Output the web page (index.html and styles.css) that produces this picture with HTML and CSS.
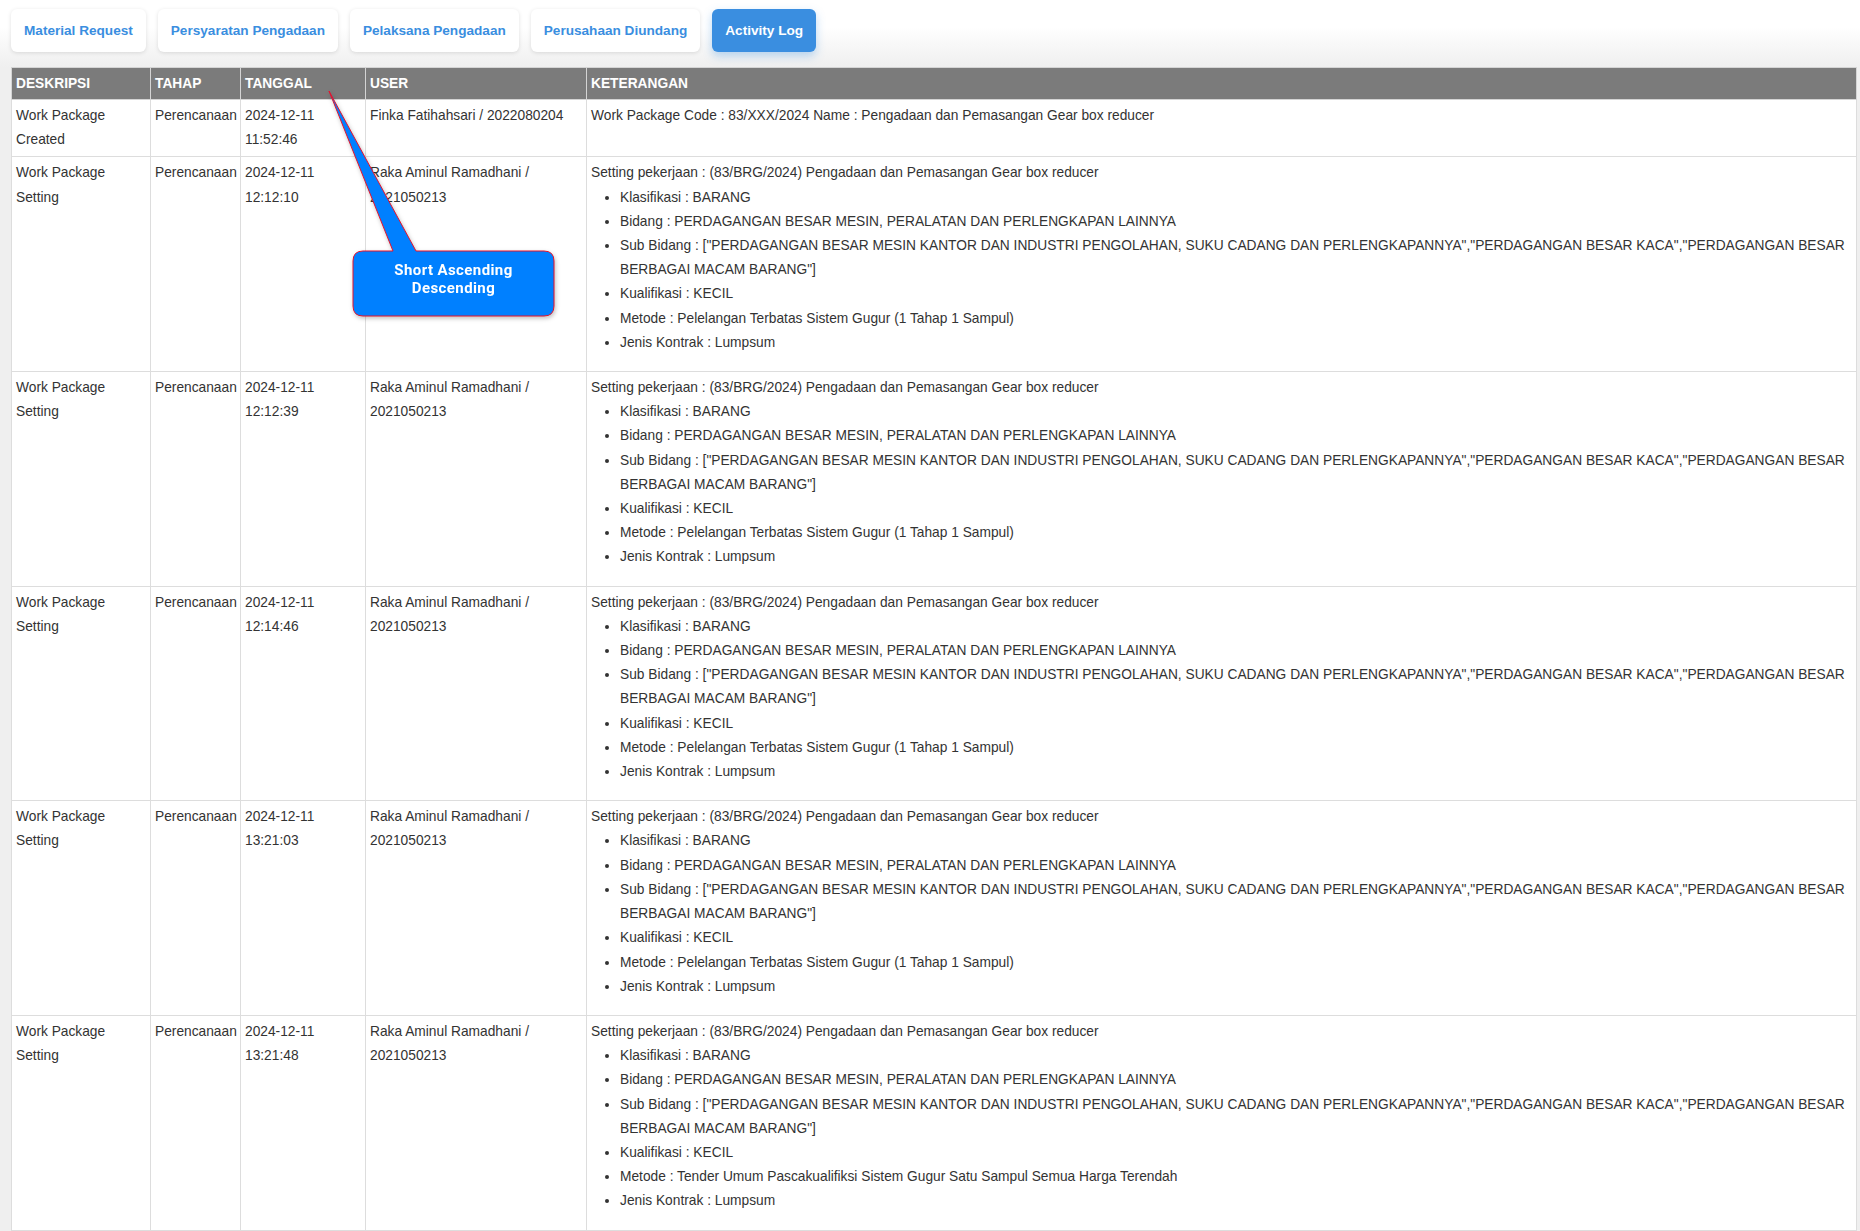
FILE: index.html
```html
<!DOCTYPE html>
<html lang="id">
  <head>
    <meta charset="UTF-8" />
    <meta name="viewport" content="width=device-width, initial-scale=1.0" />
    <title>Activity Log</title>
    <link rel="stylesheet" href="styles.css">
  </head>
  <body>
    <div class="tab-bar">
      <div class="tab">Material Request</div>
      <div class="tab">Persyaratan Pengadaan</div>
      <div class="tab">Pelaksana Pengadaan</div>
      <div class="tab">Perusahaan Diundang</div>
      <div class="tab active">Activity Log</div>
    </div>

    <table class="log-table">
      <colgroup>
        <col class="col-desc" />
        <col class="col-tahap" />
        <col class="col-tanggal" />
        <col class="col-user" />
        <col />
      </colgroup>
      <thead>
        <tr>
          <th>Deskripsi</th>
          <th>Tahap</th>
          <th>Tanggal</th>
          <th>User</th>
          <th>Keterangan</th>
        </tr>
      </thead>
      <tbody>
        <tr>
          <td>Work Package Created</td>
          <td>Perencanaan</td>
          <td>2024-12-11 11:52:46</td>
          <td>Finka Fatihahsari / 2022080204</td>
          <td>Work Package Code : 83/XXX/2024 Name : Pengadaan dan Pemasangan Gear box reducer</td>
        </tr>
        <tr>
          <td>Work Package Setting</td>
          <td>Perencanaan</td>
          <td>2024-12-11 12:12:10</td>
          <td>Raka Aminul Ramadhani / 2021050213</td>
          <td>
            Setting pekerjaan : (83/BRG/2024) Pengadaan dan Pemasangan Gear box reducer
            <ul>
              <li>Klasifikasi : BARANG</li>
              <li>Bidang : PERDAGANGAN BESAR MESIN, PERALATAN DAN PERLENGKAPAN LAINNYA</li>
              <li>Sub Bidang : ["PERDAGANGAN BESAR MESIN KANTOR DAN INDUSTRI PENGOLAHAN, SUKU CADANG DAN PERLENGKAPANNYA","PERDAGANGAN BESAR KACA","PERDAGANGAN BESAR BERBAGAI MACAM BARANG"]</li>
              <li>Kualifikasi : KECIL</li>
              <li>Metode : Pelelangan Terbatas Sistem Gugur (1 Tahap 1 Sampul)</li>
              <li>Jenis Kontrak : Lumpsum</li>
            </ul>
          </td>
        </tr>
        <tr>
          <td>Work Package Setting</td>
          <td>Perencanaan</td>
          <td>2024-12-11 12:12:39</td>
          <td>Raka Aminul Ramadhani / 2021050213</td>
          <td>
            Setting pekerjaan : (83/BRG/2024) Pengadaan dan Pemasangan Gear box reducer
            <ul>
              <li>Klasifikasi : BARANG</li>
              <li>Bidang : PERDAGANGAN BESAR MESIN, PERALATAN DAN PERLENGKAPAN LAINNYA</li>
              <li>Sub Bidang : ["PERDAGANGAN BESAR MESIN KANTOR DAN INDUSTRI PENGOLAHAN, SUKU CADANG DAN PERLENGKAPANNYA","PERDAGANGAN BESAR KACA","PERDAGANGAN BESAR BERBAGAI MACAM BARANG"]</li>
              <li>Kualifikasi : KECIL</li>
              <li>Metode : Pelelangan Terbatas Sistem Gugur (1 Tahap 1 Sampul)</li>
              <li>Jenis Kontrak : Lumpsum</li>
            </ul>
          </td>
        </tr>
        <tr>
          <td>Work Package Setting</td>
          <td>Perencanaan</td>
          <td>2024-12-11 12:14:46</td>
          <td>Raka Aminul Ramadhani / 2021050213</td>
          <td>
            Setting pekerjaan : (83/BRG/2024) Pengadaan dan Pemasangan Gear box reducer
            <ul>
              <li>Klasifikasi : BARANG</li>
              <li>Bidang : PERDAGANGAN BESAR MESIN, PERALATAN DAN PERLENGKAPAN LAINNYA</li>
              <li>Sub Bidang : ["PERDAGANGAN BESAR MESIN KANTOR DAN INDUSTRI PENGOLAHAN, SUKU CADANG DAN PERLENGKAPANNYA","PERDAGANGAN BESAR KACA","PERDAGANGAN BESAR BERBAGAI MACAM BARANG"]</li>
              <li>Kualifikasi : KECIL</li>
              <li>Metode : Pelelangan Terbatas Sistem Gugur (1 Tahap 1 Sampul)</li>
              <li>Jenis Kontrak : Lumpsum</li>
            </ul>
          </td>
        </tr>
        <tr>
          <td>Work Package Setting</td>
          <td>Perencanaan</td>
          <td>2024-12-11 13:21:03</td>
          <td>Raka Aminul Ramadhani / 2021050213</td>
          <td>
            Setting pekerjaan : (83/BRG/2024) Pengadaan dan Pemasangan Gear box reducer
            <ul>
              <li>Klasifikasi : BARANG</li>
              <li>Bidang : PERDAGANGAN BESAR MESIN, PERALATAN DAN PERLENGKAPAN LAINNYA</li>
              <li>Sub Bidang : ["PERDAGANGAN BESAR MESIN KANTOR DAN INDUSTRI PENGOLAHAN, SUKU CADANG DAN PERLENGKAPANNYA","PERDAGANGAN BESAR KACA","PERDAGANGAN BESAR BERBAGAI MACAM BARANG"]</li>
              <li>Kualifikasi : KECIL</li>
              <li>Metode : Pelelangan Terbatas Sistem Gugur (1 Tahap 1 Sampul)</li>
              <li>Jenis Kontrak : Lumpsum</li>
            </ul>
          </td>
        </tr>
        <tr>
          <td>Work Package Setting</td>
          <td>Perencanaan</td>
          <td>2024-12-11 13:21:48</td>
          <td>Raka Aminul Ramadhani / 2021050213</td>
          <td>
            Setting pekerjaan : (83/BRG/2024) Pengadaan dan Pemasangan Gear box reducer
            <ul>
              <li>Klasifikasi : BARANG</li>
              <li>Bidang : PERDAGANGAN BESAR MESIN, PERALATAN DAN PERLENGKAPAN LAINNYA</li>
              <li>Sub Bidang : ["PERDAGANGAN BESAR MESIN KANTOR DAN INDUSTRI PENGOLAHAN, SUKU CADANG DAN PERLENGKAPANNYA","PERDAGANGAN BESAR KACA","PERDAGANGAN BESAR BERBAGAI MACAM BARANG"]</li>
              <li>Kualifikasi : KECIL</li>
              <li>Metode : Tender Umum Pascakualifiksi Sistem Gugur Satu Sampul Semua Harga Terendah</li>
              <li>Jenis Kontrak : Lumpsum</li>
            </ul>
          </td>
        </tr>
      </tbody>
    </table>

    <!-- annotation callout pointing at the TANGGAL header -->
    <svg class="callout" width="245" height="240" viewBox="0 0 245 240">
      <path
        d="M43 166 L73 166 L9 6 L96 166 L224 166 Q234 166 234 176 L234 221 Q234 231 224 231 L43 231 Q33 231 33 221 L33 176 Q33 166 43 166 Z"
        fill="#0080ff"
        stroke="#e8102a"
        stroke-width="1"
        stroke-linejoin="round"
      />
      <text x="133.5" y="190" class="callout-text">Short Ascending</text>
      <text x="133.5" y="208" class="callout-text">Descending</text>
    </svg>
  </body>
</html>
```

FILE: styles.css
```css
* {
  box-sizing: border-box;
}

body {
  margin: 0;
  font-family: "Liberation Sans", Arial, sans-serif;
  font-size: 13.75px;
  color: #333;
  background: #efefef;
  position: relative;
  min-height: 1231px;
}

.tab-bar {
  display: flex;
  gap: 12px;
  padding: 9px 11px 15px;
  background: linear-gradient(to bottom, #fff 0%, #fff 40%, #efefef 100%);
}

.tab {
  height: 43px;
  padding: 0 13px;
  display: flex;
  align-items: center;
  background: #fff;
  border-radius: 6px;
  box-shadow: 0 1px 4px rgba(0, 0, 0, 0.12);
  color: #3a8ee0;
  font-size: 13.6px;
  font-weight: bold;
  cursor: pointer;
}

.tab.active {
  background: #3a8ee0;
  color: #fff;
  box-shadow: 0 4px 10px rgba(58, 142, 224, 0.35);
}

.log-table {
  margin-left: 11px;
  width: 1846px;
  border-collapse: collapse;
  table-layout: fixed;
  background: #fff;
}

.col-desc {
  width: 139px;
}

.col-tahap {
  width: 90px;
}

.col-tanggal {
  width: 125px;
}

.col-user {
  width: 221px;
}

.log-table th {
  background: #7b7b7b;
  color: #fff;
  text-align: left;
  font-weight: bold;
  text-transform: uppercase;
  padding: 4px;
  line-height: 23px;
  border: 1px solid #d4d4d4;
}

.log-table td {
  vertical-align: top;
  padding: 4px;
  line-height: 24.2px;
  border: 1px solid #ddd;
}

.log-table ul {
  margin: 0 0 12px;
  padding-left: 29px;
}

.callout {
  position: absolute;
  left: 320px;
  top: 85px;
  filter: drop-shadow(1px 2px 2px rgba(0, 0, 0, 0.25));
}

.callout-text {
  fill: #fff;
  font-family: Roboto, "DejaVu Sans", sans-serif;
  font-weight: bold;
  font-size: 15px;
  letter-spacing: 0.4px;
  text-anchor: middle;
}
```
